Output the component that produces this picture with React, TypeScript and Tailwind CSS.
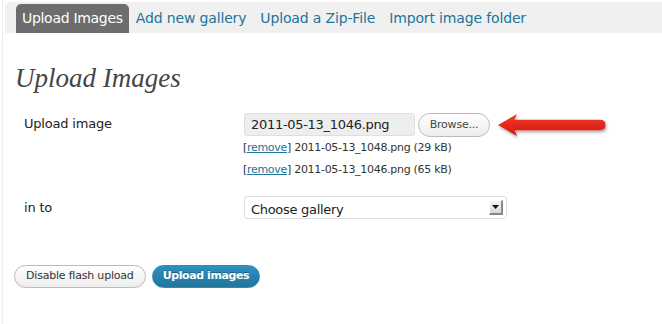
import { useState } from 'react';

const tabs = ['Upload Images', 'Add new gallery', 'Upload a Zip-File', 'Import image folder'];

const files = [
  { name: '2011-05-13_1048.png', size: '29 kB' },
  { name: '2011-05-13_1046.png', size: '65 kB' },
];

function RedArrow() {
  return (
    <svg width="116" height="30" viewBox="0 0 116 30" className="ml-[7px] shrink-0">
      <defs>
        <linearGradient id="arrowFill" x1="0" y1="0" x2="0" y2="1">
          <stop offset="0" stopColor="#f2402f" />
          <stop offset="1" stopColor="#d5120d" />
        </linearGradient>
        <filter id="arrowShadow" x="-10%" y="-30%" width="120%" height="180%">
          <feDropShadow dx="1" dy="2" stdDeviation="1.5" floodColor="#000" floodOpacity="0.35" />
        </filter>
      </defs>
      <path
        d="M1 12 L20 1 L17.5 6.8 L103 6.8 Q108.5 6.8 108.5 12 Q108.5 17.2 103 17.2 L17.5 17.2 L20 23 Z"
        fill="url(#arrowFill)"
        filter="url(#arrowShadow)"
      />
    </svg>
  );
}

export default function App() {
  const [gallery, setGallery] = useState('');

  return (
    <div className="w-[662px] h-[324px] bg-white overflow-hidden pl-[2px]" style={{ fontFamily: '"DejaVu Sans", "Noto Sans", sans-serif' }}>
      <div className="h-full border-l border-[#ececec] pt-[2px] pl-[2px]">
        {/* tab bar */}
        <div className="h-[31px] bg-[#f0f0f0] rounded-tl-[5px] flex items-end pl-[11px]">
          {tabs.map((t, i) => (
            <div
              key={t}
              className={
                i === 0
                  ? 'h-[29px] px-[6px] rounded-t-[5px] bg-[#6d6d6d] text-white text-[14px] leading-[29px] tracking-[-0.3px] mr-[7px]'
                  : 'h-[29px] text-[#21759b] text-[14px] leading-[29px] tracking-[-0.15px] mr-[14px]'
              }
            >
              {t}
            </div>
          ))}
        </div>

        <h2
          className="ml-[10px] mt-[30px] text-[27px] leading-[30px] italic text-[#464646] [text-shadow:0_1px_0_#fff]"
          style={{ fontFamily: '"Liberation Serif", "DejaVu Serif", serif' }}
        >
          Upload Images
        </h2>

        <div className="mt-[20px] flex">
          <div className="w-[239px] pl-[19px] pt-[2px] text-[13px] leading-[18px] text-[#222] tracking-[-0.2px]">Upload image</div>
          <div>
            <div className="flex items-start h-[25px]">
              <div className="w-[171px] h-[23px] bg-[#eeeeee] border border-[#dfdfdf] rounded-[3px] pl-[6px] text-[13px] leading-[21px] text-[#222] tracking-[-0.3px]">
                2011-05-13_1046.png
              </div>
              <button className="ml-[3px] w-[72px] h-[24px] rounded-[12px] border border-[#bbb] bg-gradient-to-b from-white to-[#ededed] text-[11px] text-[#464646] tracking-[-0.2px]">
                Browse...
              </button>
              <RedArrow />
            </div>
            <div className="-mt-[1px] text-[11px] leading-[22px] text-[#333] tracking-[-0.3px]">
              {files.map((f) => (
                <div key={f.name} className="-ml-[1px]">
                  [<span className="text-[#21759b] underline">remove</span>] {f.name} ({f.size})
                </div>
              ))}
            </div>
          </div>
        </div>

        <div className="mt-[15px] flex items-center">
          <div className="w-[239px] pl-[19px] text-[13px] text-[#222] tracking-[-0.2px]">in to</div>
          <div className="relative w-[263px] h-[23px] bg-white border border-[#dfdfdf] rounded-[3px]">
            <select
              value={gallery}
              onChange={(e) => setGallery(e.target.value)}
              className="appearance-none w-full h-full bg-transparent pl-[6px] text-[13px] text-[#222] tracking-[-0.3px] outline-none"
            >
              <option value="">Choose gallery</option>
            </select>
            <div className="absolute right-[3px] top-[3px] w-[14px] h-[15px] bg-gradient-to-b from-[#f4f4f4] to-[#d8d8d8] border-r-2 border-b-2 border-[#888] border-t border-l border-t-white border-l-white flex items-center justify-center pointer-events-none">
              <svg width="7" height="4" viewBox="0 0 7 4">
                <path d="M0 0 L7 0 L3.5 4 Z" fill="#111" />
              </svg>
            </div>
          </div>
        </div>

        <div className="mt-[46px] ml-[9px] flex gap-[6px]">
          <button className="h-[23px] px-[11px] rounded-[12px] border border-[#bbb] bg-gradient-to-b from-white to-[#ededed] text-[11px] text-[#333] tracking-[-0.2px]">
            Disable flash upload
          </button>
          <button className="h-[23px] px-[10px] rounded-[12px] border border-[#298cba] bg-gradient-to-b from-[#2e8fc2] to-[#21759b] text-[11px] font-bold text-white tracking-[-0.4px] [text-shadow:0_-1px_0_rgba(0,0,0,0.3)]">
            Upload images
          </button>
        </div>
      </div>
    </div>
  );
}
